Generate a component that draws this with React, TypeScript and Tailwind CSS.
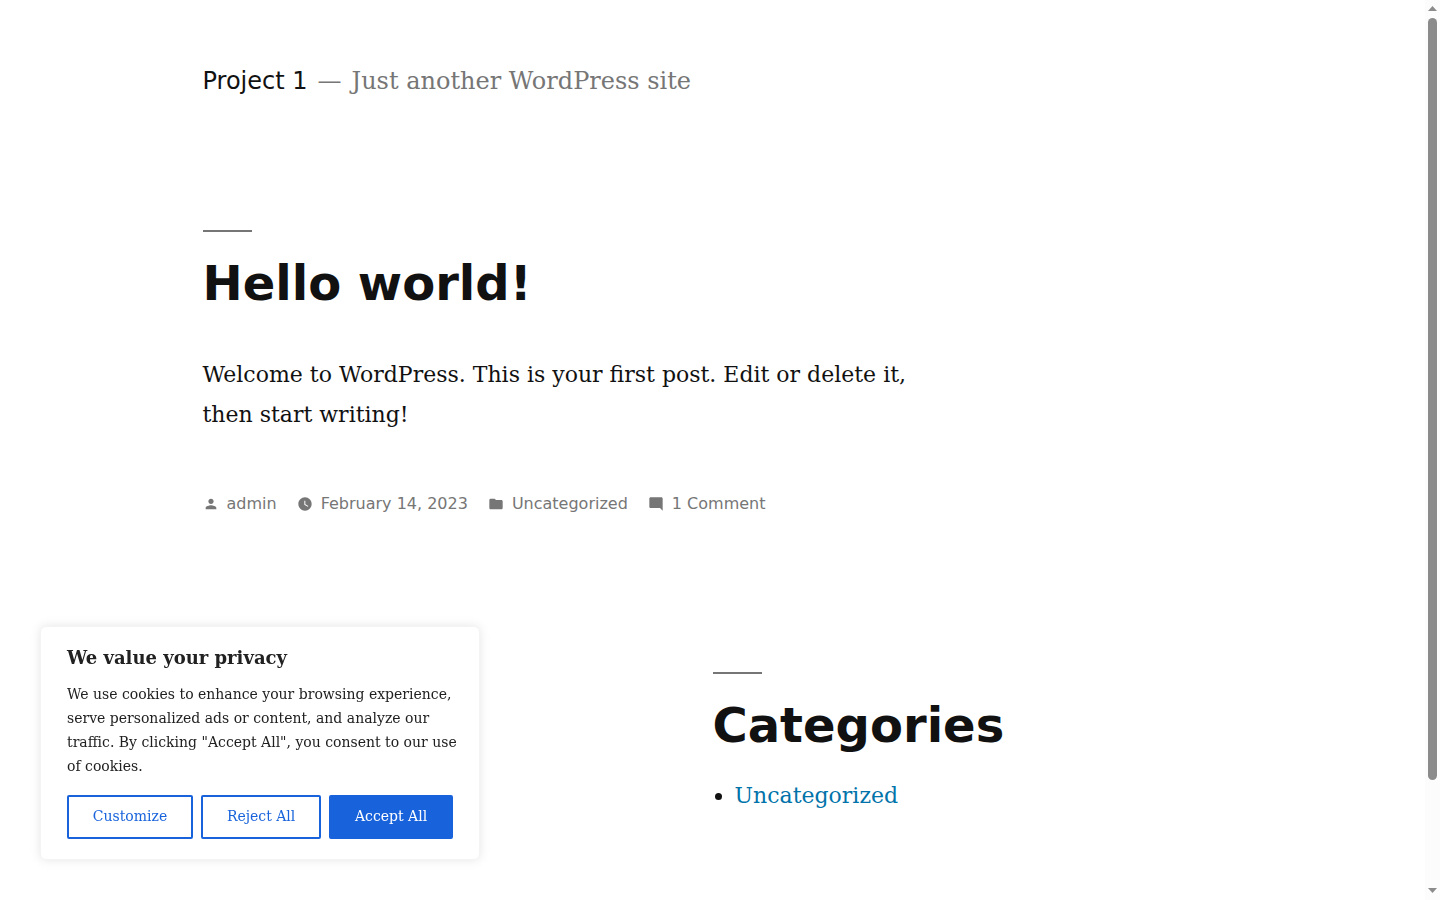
import type { ReactNode } from 'react';

const metaItems = [
  {
    label: 'admin',
    path: 'M12 12c2.21 0 4-1.79 4-4s-1.79-4-4-4-4 1.79-4 4 1.79 4 4 4zm0 2c-2.67 0-8 1.34-8 4v2h16v-2c0-2.66-5.33-4-8-4z',
  },
  {
    label: 'February 14, 2023',
    path: 'M12 2C6.5 2 2 6.5 2 12s4.5 10 10 10 10-4.5 10-10S17.5 2 12 2zm4.2 14.2L11 13V7h1.5v5.2l4.5 2.7-.8 1.3z',
  },
  {
    label: 'Uncategorized',
    path: 'M10 4H4c-1.1 0-2 .9-2 2v12c0 1.1.9 2 2 2h16c1.1 0 2-.9 2-2V8c0-1.1-.9-2-2-2h-8l-2-2z',
  },
  {
    label: '1 Comment',
    path: 'M22 4c0-1.1-.9-2-2-2H4c-1.1 0-2 .9-2 2v12c0 1.1.9 2 2 2h14l4 4V4z',
  },
];

function Heading({ level, children }: { level: 1 | 2; children: ReactNode }) {
  const Tag = level === 1 ? 'h1' : 'h2';
  return (
    <>
      <div className="h-0.5 w-[49px] bg-[#767676]" />
      <Tag className="mt-[21px] font-['DejaVu_Sans',sans-serif] text-5xl leading-[60px] font-bold">{children}</Tag>
    </>
  );
}

function CookieBanner() {
  const button = 'h-11 grow rounded-xs border-2 border-[#1863dc] px-5 pb-0.5 text-sm whitespace-nowrap';
  return (
    <section
      aria-labelledby="cookie-title"
      className="fixed bottom-10 left-10 w-[440px] rounded-md border border-[#f4f4f4] bg-white px-[26px] pt-[19px] pb-5 text-[#212121] shadow-[0_0_10px_#acabab4d]"
    >
      <h2 id="cookie-title" className="text-lg leading-6 font-bold">We value your privacy</h2>
      <p className="mt-3 -mr-3 text-sm leading-6">
        We use cookies to enhance your browsing experience, serve personalized ads or content, and analyze our
        traffic. By clicking "Accept All", you consent to our use of cookies.
      </p>
      <div className="mt-[17px] flex gap-2">
        <button type="button" className={`${button} text-[#1863dc]`}>Customize</button>
        <button type="button" className={`${button} text-[#1863dc]`}>Reject All</button>
        <button type="button" className={`${button} bg-[#1863dc] text-white`}>Accept All</button>
      </div>
    </section>
  );
}

function ScrollTrack() {
  return (
    <div aria-hidden="true" className="flex w-[15px] shrink-0 flex-col items-center bg-[#fcfcfc]">
      <svg viewBox="0 0 15 18" className="h-[18px] w-[15px] shrink-0 fill-[#8b8b8b]">
        <path d="M3 11 7.5 6 12 11z" />
      </svg>
      <div className="h-[762px] w-[9px] rounded-full bg-[#8b8b8b]" />
      <svg viewBox="0 0 15 18" className="mt-auto h-[18px] w-[15px] shrink-0 fill-[#8b8b8b]">
        <path d="M3 6h9l-4.5 5z" />
      </svg>
    </div>
  );
}

export default function App() {
  return (
    <div className="flex h-screen overflow-hidden bg-white font-['DejaVu_Serif',serif] text-[#111]">
      <div className="min-w-0 flex-1">
        <div className="mx-[calc(10%+60px)] pt-[63px]">
          <header className="flex items-center gap-2.5 text-2xl leading-9 text-[#767676]">
            <a href="#" className="font-['DejaVu_Sans',sans-serif] text-[#111]">Project 1</a>
            <span>—</span>
            <p>Just another WordPress site</p>
          </header>

          <main className="mt-[131px]">
            <article>
              <Heading level={1}>Hello world!</Heading>
              <p className="mt-[42px] max-w-[720px] text-[22px] leading-10">
                Welcome to WordPress. This is your first post. Edit or delete it, then start writing!
              </p>
              <footer className="mt-[57px] flex gap-5 font-['DejaVu_Sans',sans-serif] text-base leading-6 text-[#767676]">
                {metaItems.map((item) => (
                  <a key={item.label} href="#" className="flex items-center gap-2">
                    <svg viewBox="0 0 24 24" className="size-4 fill-current">
                      <path d={item.path} />
                    </svg>
                    {item.label}
                  </a>
                ))}
              </footer>
            </article>
          </main>

          <aside className="mt-[156px] grid grid-cols-2">
            <section className="col-start-2">
              <Heading level={2}>Categories</Heading>
              <ul className="mt-[21px] list-disc pl-[22px] text-[22px] leading-10">
                <li>
                  <a href="#" className="text-[#0073aa]">Uncategorized</a>
                </li>
              </ul>
            </section>
          </aside>
        </div>
      </div>
      <ScrollTrack />
      <CookieBanner />
    </div>
  );
}
